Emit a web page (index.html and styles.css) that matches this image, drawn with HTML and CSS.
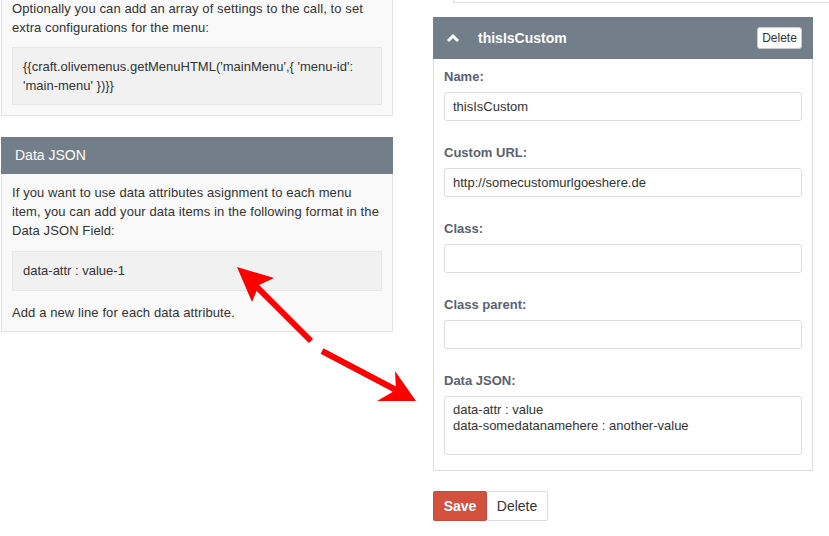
FILE: index.html
```html
<!DOCTYPE html>
<html lang="en">
  <head>
    <meta charset="UTF-8" />
    <meta name="viewport" content="width=device-width, initial-scale=1.0" />
    <title>Olive Menus - Custom item</title>
    <link rel="stylesheet" href="styles.css">
  </head>
  <body>
    <div class="page">
      <div class="help-col">
        <div class="help-box first">
          <p>Optionally you can add an array of settings to the call, to set extra configurations for the menu:</p>
          <div class="code">{{craft.olivemenus.getMenuHTML('mainMenu',{ 'menu-id': 'main-menu' })}}</div>
        </div>

        <div class="help-box">
          <div class="help-head">Data JSON</div>
          <div class="help-body">
            <p>If you want to use data attributes asignment to each menu item, you can add your data items in the following format in the Data JSON Field:</p>
            <div class="code">data-attr : value-1</div>
            <p class="last">Add a new line for each data attribute.</p>
          </div>
        </div>
      </div>

      <div class="edit-col">
        <div class="tab-strip"></div>

        <div class="item-panel">
          <div class="item-head">
            <svg class="chevron" width="14" height="10" viewBox="0 0 14 10">
              <polyline points="2,8 7,3 12,8" fill="none" stroke="#fff" stroke-width="3" />
            </svg>
            <span class="item-title">thisIsCustom</span>
            <button class="btn-small">Delete</button>
          </div>
          <div class="item-body">
            <div class="field">
              <label for="name">Name:</label>
              <input type="text" id="name" value="thisIsCustom" />
            </div>
            <div class="field">
              <label for="url">Custom URL:</label>
              <input type="text" id="url" value="http://somecustomurlgoeshere.de" />
            </div>
            <div class="field">
              <label for="cls">Class:</label>
              <input type="text" id="cls" />
            </div>
            <div class="field">
              <label for="clsp">Class parent:</label>
              <input type="text" id="clsp" />
            </div>
            <div class="field last">
              <label for="json">Data JSON:</label>
              <textarea id="json">data-attr : value
data-somedatanamehere : another-value</textarea>
            </div>
          </div>
        </div>

        <div class="actions">
          <button class="btn-save">Save</button>
          <button class="btn-delete">Delete</button>
        </div>
      </div>
    </div>

    <!-- annotation arrows drawn over the screenshot -->
    <svg class="arrows" width="829" height="536" viewBox="0 0 829 536">
      <line x1="311" y1="341" x2="256" y2="286" stroke="#f00" stroke-width="6" />
      <polygon points="237,267 274,278 259,285 252,302" fill="#f00" />
      <line x1="322" y1="351" x2="398" y2="391" stroke="#f00" stroke-width="6" />
      <polygon points="416,401 395,371 396,390 377,401" fill="#f00" />
    </svg>
  </body>
</html>
```

FILE: styles.css
```css
body {
  margin: 0;
  font-family: "Liberation Sans", Arial, sans-serif;
  font-size: 13px;
  color: #333;
  background: #fff;
  overflow: hidden;
}
p {
  margin: 0;
}
.page {
  display: flex;
  align-items: flex-start;
  padding-left: 1px;
}
.help-col {
  width: 392px;
}
.help-box {
  background: #f9f9f9;
  border: 1px solid #e3e3e3;
  line-height: 19px;
  letter-spacing: 0.1px;
}
.help-box.first {
  margin-top: -12px;
  padding: 10px 10px 10px 10px;
  margin-bottom: 21px;
}
.help-head {
  background: #737e8b;
  color: #fff;
  font-size: 14px;
  height: 37px;
  line-height: 37px;
  padding-left: 14px;
  margin: -1px -1px 0;
  letter-spacing: 0;
}
.help-body {
  padding: 9px 10px 9px;
}
.code {
  background: #f1f1f1;
  border: 1px solid #e6e6e6;
  padding: 9px 10px;
  margin-top: 10px;
  letter-spacing: 0;
}
.help-body .code {
  margin-top: 11px;
  padding: 9px 10px 10px;
}
.help-body p.last {
  margin-top: 12px;
}
.edit-col {
  margin-left: 40px;
  width: 380px;
}
.tab-strip {
  height: 2px;
  border-bottom: 1px solid #ddd;
  border-left: 1px solid #ddd;
  margin-left: 20px;
  margin-right: -16px;
}
.item-panel {
  margin-top: 14px;
}
.item-head {
  display: flex;
  align-items: center;
  height: 42px;
  background: #737e8b;
  padding: 0 11px 0 13px;
}
.chevron {
  margin-right: 18px;
}
.item-title {
  color: #fff;
  font-weight: bold;
  font-size: 14px;
  flex: 1;
}
.btn-small {
  font-family: inherit;
  font-size: 12px;
  color: #333;
  background: #fff;
  border: 1px solid #ccc;
  border-radius: 3px;
  height: 22px;
  width: 45px;
  padding: 0;
}
.item-body {
  border: 1px solid #ddd;
  border-top: none;
  padding: 9px 10px 15px;
}
.field {
  margin-bottom: 23px;
}
.field.last {
  margin-bottom: 0;
}
label {
  display: block;
  font-weight: bold;
  color: #5a6170;
  line-height: 18px;
  margin-bottom: 6px;
}
input[type="text"],
textarea {
  display: block;
  box-sizing: border-box;
  width: 100%;
  font-family: inherit;
  font-size: 13px;
  color: #333;
  border: 1px solid #ddd;
  border-radius: 3px;
  background: #fff;
}
input[type="text"] {
  height: 29px;
  padding: 0 8px;
}
textarea {
  height: 59px;
  padding: 5px 8px;
  line-height: 16px;
  resize: none;
}
.actions {
  display: flex;
  margin-top: 20px;
}
.actions button {
  font-family: inherit;
  font-size: 14px;
  height: 30px;
  border-radius: 2px;
}
.btn-save {
  background: #d4513f;
  color: #fff;
  font-weight: bold;
  border: 1px solid #c84a39;
  width: 54px;
  border-top-right-radius: 0;
  border-bottom-right-radius: 0;
}
.btn-delete {
  background: #fff;
  color: #333;
  border: 1px solid #ddd;
  border-left: none;
  width: 61px;
  border-top-left-radius: 0;
  border-bottom-left-radius: 0;
}
.arrows {
  position: absolute;
  left: 0;
  top: 0;
  pointer-events: none;
}
```
